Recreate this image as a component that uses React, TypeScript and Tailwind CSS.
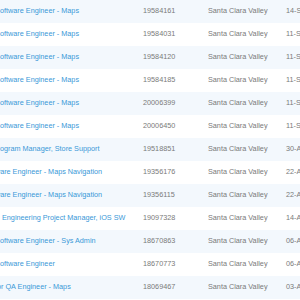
import React from 'react';

interface JobRow {
  title: string;
  shift: string;
  reqId: string;
  location: string;
  posted: string;
}

const rows: JobRow[] = [
  { title: 'Software Engineer - Maps', shift: 'ml-[-4.8px]', reqId: '19584161', location: 'Santa Clara Valley', posted: '14-Sep-2012' },
  { title: 'Software Engineer - Maps', shift: 'ml-[-4.8px]', reqId: '19584031', location: 'Santa Clara Valley', posted: '11-Sep-2012' },
  { title: 'Software Engineer - Maps', shift: 'ml-[-4.8px]', reqId: '19584120', location: 'Santa Clara Valley', posted: '11-Sep-2012' },
  { title: 'Software Engineer - Maps', shift: 'ml-[-4.8px]', reqId: '19584185', location: 'Santa Clara Valley', posted: '11-Sep-2012' },
  { title: 'Software Engineer - Maps', shift: 'ml-[-4.8px]', reqId: '20006399', location: 'Santa Clara Valley', posted: '11-Sep-2012' },
  { title: 'Software Engineer - Maps', shift: 'ml-[-4.8px]', reqId: '20006450', location: 'Santa Clara Valley', posted: '11-Sep-2012' },
  { title: 'Program Manager, Store Support', shift: 'ml-[-7.3px]', reqId: '19518851', location: 'Santa Clara Valley', posted: '30-Aug-2012' },
  { title: 'Software Engineer - Maps Navigation', shift: 'ml-[-18px]', reqId: '19356176', location: 'Santa Clara Valley', posted: '22-Aug-2012' },
  { title: 'Software Engineer - Maps Navigation', shift: 'ml-[-18px]', reqId: '19356115', location: 'Santa Clara Valley', posted: '22-Aug-2012' },
  { title: 'Engineering Project Manager, iOS SW', shift: 'ml-[2px]', reqId: '19097328', location: 'Santa Clara Valley', posted: '14-Aug-2012' },
  { title: 'Software Engineer - Sys Admin', shift: 'ml-[-4.8px]', reqId: '18670863', location: 'Santa Clara Valley', posted: '06-Aug-2012' },
  { title: 'Software Engineer', shift: 'ml-[-4.8px]', reqId: '18670773', location: 'Santa Clara Valley', posted: '06-Aug-2012' },
  { title: 'Senior QA Engineer - Maps', shift: 'ml-[-17.5px]', reqId: '18069467', location: 'Santa Clara Valley', posted: '03-Aug-2012' },
  { title: 'Software Engineer - Maps', shift: 'ml-[-4.8px]', reqId: '18069412', location: 'Santa Clara Valley', posted: '03-Aug-2012' },
];

const App: React.FC = () => {
  return (
    <div className="w-[300px] h-[300px] overflow-hidden bg-white font-['Liberation_Sans',Arial,sans-serif] text-[7.25px]">
      {rows.map((row, i) => (
        <div
          key={i}
          className={`grid grid-cols-[143px_65px_78px_60px] items-center h-[23px] whitespace-nowrap ${
            i % 2 === 0 ? 'bg-[#f3f8fd]' : 'bg-white'
          }`}
        >
          {/* Job title (link) */}
          <div className="overflow-hidden">
            <span className={`inline-block text-[#3a98d8] ${row.shift}`}>{row.title}</span>
          </div>
          <div className="text-[#7a7a7a]">{row.reqId}</div>
          <div className="text-[#7a7a7a]">{row.location}</div>
          <div className="text-[#7a7a7a]">{row.posted}</div>
        </div>
      ))}
    </div>
  );
};

export default App;
